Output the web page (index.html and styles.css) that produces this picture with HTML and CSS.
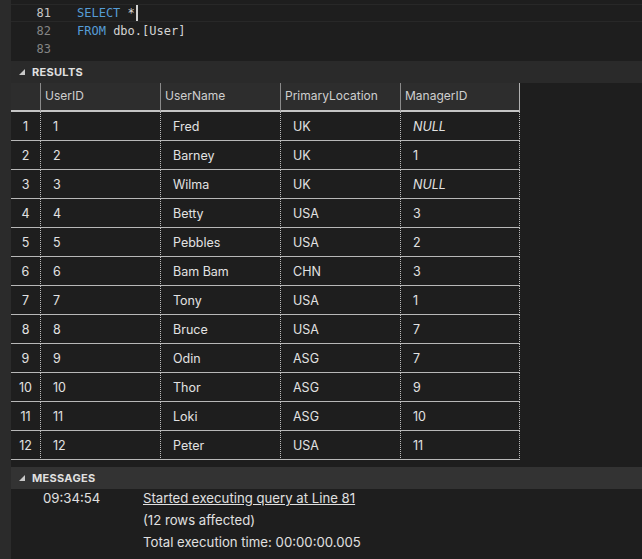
FILE: index.html
```html
<!DOCTYPE html>
<html>
<head>
<meta charset="utf-8">
<link rel="stylesheet" href="styles.css">
</head>
<body>
<div class="strip"></div>
<div class="main">
  <div class="editor">
    <div class="line current"><span class="ln active">81</span><span class="code"><span class="kw">SELECT</span> *<span class="cursor"></span></span></div>
    <div class="line"><span class="ln">82</span><span class="code"><span class="kw">FROM</span> dbo.[User]</span></div>
    <div class="line"><span class="ln">83</span><span class="code"></span></div>
  </div>
  <div class="bar results-bar"><svg class="tri" width="6" height="6" viewBox="0 0 6 6"><path d="M6 0 L6 6 L0 6 Z" fill="#c8c8c8"/></svg><span>RESULTS</span></div>
  <div class="grid">
    <div class="hcell rn"></div>
    <div class="hcell">UserID</div>
    <div class="hcell">UserName</div>
    <div class="hcell">PrimaryLocation</div>
    <div class="hcell last">ManagerID</div>

    <div class="cell rn">1</div><div class="cell">1</div><div class="cell">Fred</div><div class="cell">UK</div><div class="cell last null">NULL</div>
    <div class="cell rn">2</div><div class="cell">2</div><div class="cell">Barney</div><div class="cell">UK</div><div class="cell last">1</div>
    <div class="cell rn">3</div><div class="cell">3</div><div class="cell">Wilma</div><div class="cell">UK</div><div class="cell last null">NULL</div>
    <div class="cell rn">4</div><div class="cell">4</div><div class="cell">Betty</div><div class="cell">USA</div><div class="cell last">3</div>
    <div class="cell rn">5</div><div class="cell">5</div><div class="cell">Pebbles</div><div class="cell">USA</div><div class="cell last">2</div>
    <div class="cell rn">6</div><div class="cell">6</div><div class="cell">Bam Bam</div><div class="cell">CHN</div><div class="cell last">3</div>
    <div class="cell rn">7</div><div class="cell">7</div><div class="cell">Tony</div><div class="cell">USA</div><div class="cell last">1</div>
    <div class="cell rn">8</div><div class="cell">8</div><div class="cell">Bruce</div><div class="cell">USA</div><div class="cell last">7</div>
    <div class="cell rn">9</div><div class="cell">9</div><div class="cell">Odin</div><div class="cell">ASG</div><div class="cell last">7</div>
    <div class="cell rn">10</div><div class="cell">10</div><div class="cell">Thor</div><div class="cell">ASG</div><div class="cell last">9</div>
    <div class="cell rn">11</div><div class="cell">11</div><div class="cell">Loki</div><div class="cell">ASG</div><div class="cell last">10</div>
    <div class="cell rn">12</div><div class="cell">12</div><div class="cell">Peter</div><div class="cell">USA</div><div class="cell last">11</div>
  </div>
  <div class="bar messages-bar"><svg class="tri" width="6" height="6" viewBox="0 0 6 6"><path d="M6 0 L6 6 L0 6 Z" fill="#c8c8c8"/></svg><span>MESSAGES</span></div>
  <div class="messages">
    <div class="msg"><span class="time">09:34:54</span><span class="link">Started executing query at Line 81</span></div>
    <div class="msg"><span class="time"></span><span>(12 rows affected)</span></div>
    <div class="msg"><span class="time"></span><span>Total execution time: 00:00:00.005</span></div>
  </div>
</div>
</body>
</html>
```

FILE: styles.css
```css
html, body {
  margin: 0;
  padding: 0;
  background: #1e1e1e;
  height: 100%;
}
body {
  display: flex;
  font-family: Inter, "Liberation Sans", sans-serif;
  color: #d8d8d8;
  overflow: hidden;
}
.strip {
  width: 11px;
  flex: none;
  background: #2b2b2b;
  height: 559px;
}
.main {
  flex: 1;
  display: flex;
  flex-direction: column;
  min-width: 0;
}
.editor {
  height: 61px;
  padding-top: 4px;
  box-sizing: border-box;
  font-family: "DejaVu Sans Mono", monospace;
  font-size: 12px;
}
.line {
  height: 18px;
  line-height: 18px;
  display: flex;
  box-sizing: border-box;
}
.line.current {
  border-top: 1px solid #282828;
  border-bottom: 1px solid #282828;
  line-height: 16px;
}
.ln {
  width: 40px;
  text-align: right;
  color: #858585;
  flex: none;
}
.ln.active { color: #c6c6c6; }
.code {
  padding-left: 26px;
  color: #d4d4d4;
  white-space: pre;
}
.kw { color: #569cd6; }
.cursor {
  display: inline-block;
  width: 2px;
  height: 16px;
  background: #d0d0d0;
  vertical-align: top;
  margin-left: 1px;
}
.bar {
  height: 22px;
  display: flex;
  align-items: center;
  font-size: 11px;
  font-weight: 700;
  letter-spacing: 0.3px;
  color: #e0e0e0;
}
.results-bar { background: #2a2a2a; }
.messages-bar { background: #333333; margin-top: 7px; }
.tri {
  margin-left: 8px;
  margin-right: 7px;
}
.grid {
  display: grid;
  grid-template-columns: 29px 120px 120px 120px 120px;
  grid-auto-rows: 29px;
  grid-template-rows: 29px;
  font-size: 12.5px;
  width: 509px;
}
.hcell {
  background: #2d2d2d;
  border-left: 1px solid #8a8a8a;
  border-bottom: 2px solid #c4c4c4;
  padding-left: 4px;
  line-height: 26px;
  font-size: 12px;
  color: #cfcfcf;
  box-sizing: border-box;
}
.hcell.rn { border-left: none; }
.hcell.last { border-right: 1px solid #b0b0b0; }
.cell {
  border-left: 1px dotted #bdbdbd;
  border-bottom: 1px solid #b8b8b8;
  padding-left: 12px;
  line-height: 29px;
  color: #e2e2e2;
  box-sizing: border-box;
}
.cell.rn {
  border-left: none;
  padding-left: 0;
  text-align: center;
}
.cell.last { border-right: 1px dotted #bdbdbd; }
.cell.null { font-style: italic; }
.messages {
  font-size: 13.2px;
  color: #e0e0e0;
  margin-top: -2px;
}
.msg {
  display: flex;
  line-height: 22px;
  height: 22px;
}
.time {
  width: 100px;
  padding-left: 32px;
  flex: none;
}
.link { text-decoration: underline; }
```
